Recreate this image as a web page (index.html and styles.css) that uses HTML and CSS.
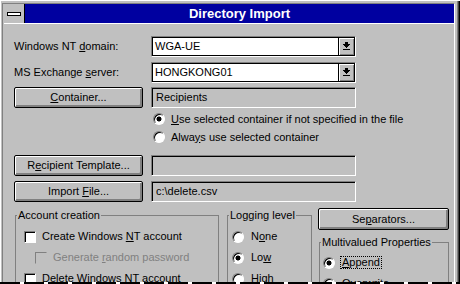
FILE: index.html
```html
<!DOCTYPE html>
<html lang="en">
<head>
    <meta charset="UTF-8">
    <title>Directory Import</title>
    <link rel="stylesheet" href="styles.css">
</head>
<body>
    <div class="window">
        <div class="frame">
            <div class="titlebar">
                <div class="sysmenu"><span class="sysbar"></span></div>
                <div class="caption">Directory Import</div>
            </div>

            <div class="client">
                <div class="row">
                    <label class="lbl">Windows NT <u>d</u>omain:</label>
                    <div class="combo">
                        <div class="combo-in">
                            <span class="combo-text">WGA-UE</span>
                            <span class="drop">
                                <svg width="7" height="9" viewBox="0 0 7 9" shape-rendering="crispEdges"><path d="M2 0h3v2H2zM0 2h7v1H0zM1 3h5v1H1zM2 4h3v1H2zM3 5h1v1H3zM0 7h7v1H0z"/></svg>
                            </span>
                        </div>
                    </div>
                </div>

                <div class="row gap5">
                    <label class="lbl">MS Exchange <u>s</u>erver:</label>
                    <div class="combo">
                        <div class="combo-in">
                            <span class="combo-text">HONGKONG01</span>
                            <span class="drop">
                                <svg width="7" height="9" viewBox="0 0 7 9" shape-rendering="crispEdges"><path d="M2 0h3v2H2zM0 2h7v1H0zM1 3h5v1H1zM2 4h3v1H2zM3 5h1v1H3zM0 7h7v1H0z"/></svg>
                            </span>
                        </div>
                    </div>
                </div>

                <div class="row gap4">
                    <button class="btn"><u>C</u>ontainer...</button>
                    <div class="field">Recipients</div>
                </div>

                <div class="options">
                    <div class="opt"><span class="radio on"></span><span><u>U</u>se selected container if not specified in the file</span></div>
                    <div class="opt"><span class="radio"></span><span>Alwa<u>y</u>s use selected container</span></div>
                </div>

                <div class="row gap9">
                    <button class="btn">R<u>e</u>cipient Template...</button>
                    <div class="field"></div>
                </div>

                <div class="row gap5">
                    <button class="btn">Import <u>F</u>ile...</button>
                    <div class="field">c:\delete.csv</div>
                </div>

                <div class="bottom">
                    <fieldset class="group account">
                        <legend>Account creation</legend>
                        <div class="line"><span class="check"></span><span>Create Windows <u>N</u>T account</span></div>
                        <div class="line sub disabled"><span class="check"></span><span>Generate <u>r</u>andom password</span></div>
                        <div class="line"><span class="check"></span><span><u>D</u>elete Windows NT account</span></div>
                    </fieldset>

                    <fieldset class="group logging">
                        <legend>Logging level</legend>
                        <div class="line"><span class="radio"></span><span>N<u>o</u>ne</span></div>
                        <div class="line"><span class="radio on"></span><span>Lo<u>w</u></span></div>
                        <div class="line"><span class="radio"></span><span><u>H</u>igh</span></div>
                    </fieldset>

                    <div class="rightcol">
                        <button class="btn wide">Se<u>p</u>arators...</button>
                        <fieldset class="group multi">
                            <legend>Multivalued Properties</legend>
                            <div class="line"><span class="radio on"></span><span class="focus"><u>A</u>ppend</span></div>
                            <div class="line"><span class="radio"></span><span class="focus-off"><u>O</u>verwrite</span></div>
                        </fieldset>
                    </div>
                </div>
            </div>
        </div>
        <div class="edge"></div>
    </div>
</body>
</html>
```

FILE: styles.css
```css
html, body {
    margin: 0;
    padding: 0;
    background-color: #c0c0c0;
}

body {
    font-family: "Liberation Sans", Arial, sans-serif;
    font-size: 11px;
    line-height: 13px;
    color: #000;
}

/* outer window frame */
.window {
    width: 460px;
    height: 284px;
    box-sizing: border-box;
    padding: 3px 5px 0 2px;
    display: flex;
    flex-direction: column;
    overflow: hidden;
    background-color: #c0c0c0;
    box-shadow: inset 1px 1px #fff, inset -1px 0 #000, inset -2px 0 #404040, inset -3px 0 #808080;
}

.frame {
    flex: 1;
    min-height: 0;
    display: flex;
    flex-direction: column;
    border: 1px solid;
    border-color: #808080 #fff #fff #808080;
    border-bottom: none;
    padding-left: 1px;
    overflow: hidden;
}

/* screen edge at the bottom of the capture */
.edge {
    height: 2px;
    margin: 0 -5px 0 -2px;
    background: repeating-linear-gradient(90deg, #000 0 20px, #fff 20px 24px);
}

.titlebar {
    display: flex;
    height: 19px;
    border-bottom: 1px solid #fff;
}

.sysmenu {
    width: 20px;
    border-right: 1px solid #000;
    background-color: #c0c0c0;
    display: flex;
    align-items: center;
    justify-content: center;
}

.sysbar {
    width: 14px;
    height: 4px;
    box-sizing: border-box;
    border: 1px solid #000;
    background-color: #fff;
}

.caption {
    flex: 1;
    background-color: #0000a0;
    color: #fff;
    font-weight: bold;
    font-size: 13px;
    line-height: 19px;
    text-align: center;
}

.client {
    flex: 1;
    min-height: 0;
    padding: 12px 0 0 10px;
}

.row {
    display: flex;
    align-items: center;
    height: 21px;
}

.gap4 { margin-top: 4px; }
.gap5 { margin-top: 5px; }
.gap9 { margin-top: 9px; }

.lbl {
    width: 137px;
}

/* combo boxes */
.combo {
    width: 205px;
    height: 21px;
    box-sizing: border-box;
    border: 1px solid;
    border-color: #808080 #fff #fff #808080;
}

.combo-in {
    display: flex;
    height: 100%;
    box-sizing: border-box;
    border: 1px solid #000;
}

.combo-text {
    flex: 1;
    background-color: #fff;
    padding-left: 2px;
    line-height: 17px;
}

.drop {
    width: 15px;
    border-left: 1px solid #000;
    background-color: #c0c0c0;
    box-shadow: inset 1px 1px #fff, inset -1px -1px #808080;
    display: flex;
    align-items: center;
    justify-content: center;
}

/* push buttons */
.btn {
    width: 129px;
    height: 21px;
    margin: 0 8px 0 0;
    padding: 0;
    font: inherit;
    color: #000;
    background-color: #c0c0c0;
    border: 1px solid #000;
    border-radius: 2px;
    box-shadow: inset 1px 1px #fff, inset -1px -1px #808080, inset -2px -2px #808080;
}

.btn.wide {
    width: 131px;
    height: 22px;
    margin: 0;
}

/* read-only edit fields */
.field {
    width: 205px;
    height: 21px;
    box-sizing: border-box;
    border: 1px solid;
    border-color: #808080 #fff #fff #808080;
    box-shadow: inset 1px 1px #000;
    padding-left: 4px;
    line-height: 19px;
}

.options {
    margin: 2px 0 0 139px;
}

.opt {
    display: flex;
    align-items: center;
    height: 18px;
}

.opt .radio {
    margin-right: 6px;
}

.radio {
    width: 12px;
    height: 12px;
    box-sizing: border-box;
    flex: none;
    border-radius: 50%;
    border: 1px solid;
    border-color: #808080 #fff #fff #808080;
    box-shadow: inset 1px 1px #000;
    background-color: #fff;
}

.radio.on {
    background: radial-gradient(circle at 50% 50%, #000 0 2.2px, #fff 2.8px);
}

.check {
    width: 12px;
    height: 12px;
    box-sizing: border-box;
    flex: none;
    border: 1px solid;
    border-color: #808080 #fff #fff #808080;
    box-shadow: inset 1px 1px #000;
    background-color: #fff;
}

.bottom {
    display: flex;
    align-items: flex-start;
    margin-top: 6px;
}

/* group boxes */
.group {
    margin: 0;
    min-width: 0;
    box-sizing: border-box;
    border: 1px solid #808080;
    padding: 4px 0 0 1px;
    height: 90px;
}

.group legend {
    padding: 0 1px;
    line-height: 13px;
}

.account {
    width: 204px;
    margin: 1px 0 0 1px;
}

.logging {
    width: 85px;
    margin: 1px 0 0 8px;
}

.rightcol {
    width: 131px;
    margin-left: 6px;
}

.multi {
    width: 130px;
    margin: 6px 0 0 1px;
    padding-top: 3px;
}

.line {
    display: flex;
    align-items: center;
    height: 21px;
}

.account .line .check {
    margin: 0 6px 0 7px;
}

.account .line.sub .check {
    margin-left: 18px;
}

.disabled {
    color: #808080;
}

.disabled .check {
    background-color: #c0c0c0;
    border-color: #808080 #c0c0c0 #c0c0c0 #808080;
    box-shadow: none;
}

.logging .line .radio {
    margin: 0 7px 0 3px;
}

.multi .line .radio {
    margin: 0 5px 0 2px;
}

.focus {
    border: 1px dotted #000;
    padding: 0 1px;
    line-height: 11px;
}

.focus-off {
    border: 1px solid transparent;
    padding: 0 1px;
}
```
